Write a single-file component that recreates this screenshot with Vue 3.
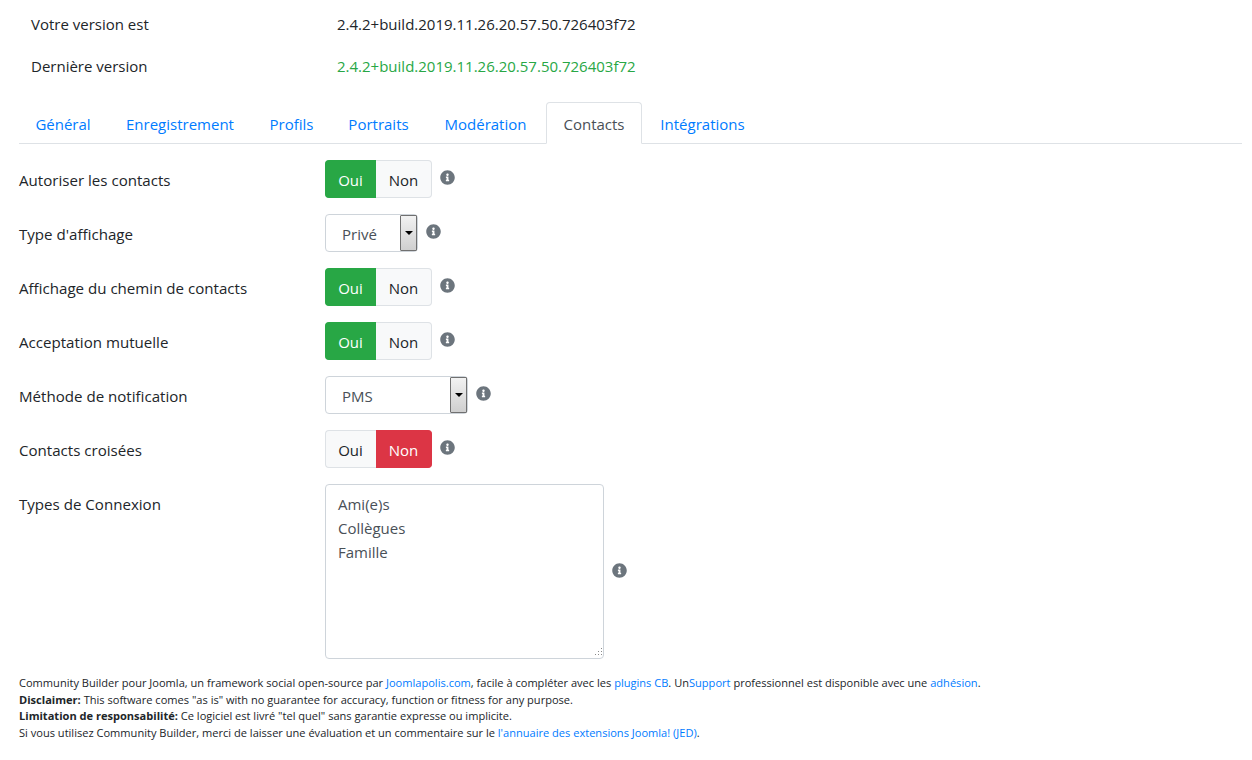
<template>
  <div class="page">
    <div class="version">
      <div class="version-row">
        <span class="version-label">Votre version est</span>
        <span>2.4.2+build.2019.11.26.20.57.50.726403f72</span>
      </div>
      <div class="version-row">
        <span class="version-label">Dernière version</span>
        <span class="latest">2.4.2+build.2019.11.26.20.57.50.726403f72</span>
      </div>
    </div>

    <ul class="tabs">
      <li
        v-for="tab in tabs"
        :key="tab.name"
        class="tab"
        :class="{ active: tab.name === 'Contacts' }"
        :style="{ width: tab.width + 'px' }"
      >{{ tab.name }}</li>
    </ul>

    <div class="form">
      <div class="row">
        <label>Autoriser les contacts</label>
        <div class="toggle"><span class="on">Oui</span><span>Non</span></div>
        <svg class="info" viewBox="0 0 512 512"><path :d="infoPath" /></svg>
      </div>
      <div class="row">
        <label>Type d'affichage</label>
        <div class="select short">
          <span>Privé</span>
          <span class="arrow"><i></i></span>
        </div>
        <svg class="info" viewBox="0 0 512 512"><path :d="infoPath" /></svg>
      </div>
      <div class="row">
        <label>Affichage du chemin de contacts</label>
        <div class="toggle"><span class="on">Oui</span><span>Non</span></div>
        <svg class="info" viewBox="0 0 512 512"><path :d="infoPath" /></svg>
      </div>
      <div class="row">
        <label>Acceptation mutuelle</label>
        <div class="toggle"><span class="on">Oui</span><span>Non</span></div>
        <svg class="info" viewBox="0 0 512 512"><path :d="infoPath" /></svg>
      </div>
      <div class="row">
        <label>Méthode de notification</label>
        <div class="select wide">
          <span>PMS</span>
          <span class="arrow"><i></i></span>
        </div>
        <svg class="info" viewBox="0 0 512 512"><path :d="infoPath" /></svg>
      </div>
      <div class="row">
        <label>Contacts croisées</label>
        <div class="toggle"><span>Oui</span><span class="off">Non</span></div>
        <svg class="info" viewBox="0 0 512 512"><path :d="infoPath" /></svg>
      </div>
      <div class="row last">
        <label>Types de Connexion</label>
        <div class="textarea">
          <div>Ami(e)s</div>
          <div>Collègues</div>
          <div>Famille</div>
          <svg class="grip" viewBox="0 0 11 11">
            <path d="M9 1h1v1H9zM6 4h1v1H6zM9 4h1v1H9zM3 7h1v1H3zM6 7h1v1H6zM9 7h1v1H9z" />
          </svg>
        </div>
        <svg class="info mid" viewBox="0 0 512 512"><path :d="infoPath" /></svg>
      </div>
    </div>

    <div class="footer">
      <div>Community Builder pour Joomla, un framework social open-source par <a>Joomlapolis.com</a>, facile à compléter avec les <a>plugins CB</a>. Un<a>Support</a> professionnel est disponible avec une <a>adhésion</a>.</div>
      <div><b>Disclaimer:</b> This software comes "as is" with no guarantee for accuracy, function or fitness for any purpose.</div>
      <div><b>Limitation de responsabilité:</b> Ce logiciel est livré "tel quel" sans garantie expresse ou implicite.</div>
      <div>Si vous utilisez Community Builder, merci de laisser une évaluation et un commentaire sur le <a>l'annuaire des extensions Joomla! (JED)</a>.</div>
    </div>
  </div>
</template>

<script setup>
const tabs = [
  { name: 'Général', width: 88 },
  { name: 'Enregistrement', width: 142 },
  { name: 'Profils', width: 77 },
  { name: 'Portraits', width: 93 },
  { name: 'Modération', width: 117 },
  { name: 'Contacts', width: 96 },
  { name: 'Intégrations', width: 117 }
]

// info-circle
const infoPath =
  'M256 8C119 8 8 119 8 256s111 248 248 248 248-111 248-248S393 8 256 8zm0 110c23 0 42 19 42 42s-19 42-42 42-42-19-42-42 19-42 42-42zm56 254c0 7-5 12-12 12h-88c-7 0-12-5-12-12v-24c0-7 5-12 12-12h12v-64h-12c-7 0-12-5-12-12v-24c0-7 5-12 12-12h64c7 0 12 5 12 12v100h12c7 0 12 5 12 12v24z'
</script>

<style>
body {
  margin: 0;
  background: #fff;
}
</style>

<style scoped>
.page {
  box-sizing: border-box;
  width: 1252px;
  height: 760px;
  padding: 3px 10px 0 19px;
  font-family: "Open Sans", "Noto Sans", sans-serif;
  font-size: 15px;
  line-height: 24px;
  color: #212529;
}

.version-row {
  display: flex;
  height: 42px;
  align-items: center;
  padding-left: 12px;
}

.version-label {
  width: 306px;
}

.latest {
  color: #28a745;
}

.tabs {
  display: flex;
  list-style: none;
  margin: 15px 0 0;
  padding: 0;
  border-bottom: 1px solid #dee2e6;
  height: 41px;
}

.tab {
  box-sizing: border-box;
  height: 42px;
  padding: 9px 0;
  margin-right: 2px;
  border: 1px solid transparent;
  border-radius: 4px 4px 0 0;
  color: #007bff;
  text-align: center;
}

.tab.active {
  color: #495057;
  background: #fff;
  border-color: #dee2e6 #dee2e6 #fff;
}

.form {
  padding-top: 16px;
}

.row {
  display: flex;
  align-items: flex-start;
  margin-bottom: 16px;
}

label {
  width: 306px;
  font-size: 15.1px;
  line-height: 40px;
  height: 38px;
}

.toggle {
  display: flex;
  height: 38px;
}

.toggle span {
  box-sizing: border-box;
  text-align: center;
  line-height: 38px;
  background: #f8f9fa;
  border: 1px solid #dee2e6;
}

.toggle span:first-child {
  width: 51px;
  padding-right: 1px;
  border-right: 0;
  border-radius: 4px 0 0 4px;
}

.toggle span:last-child {
  width: 56px;
  border-left: 0;
  border-radius: 0 4px 4px 0;
}

.toggle .on {
  background: #28a745;
  border-color: #28a745;
  color: #fff;
}

.toggle .off {
  background: #dc3545;
  border-color: #dc3545;
  color: #fff;
}

.info {
  width: 15px;
  height: 15px;
  margin: 10px 0 0 8px;
  fill: #6c757d;
}

.info.mid {
  margin-top: 79px;
}

.select {
  box-sizing: border-box;
  display: flex;
  justify-content: space-between;
  height: 38px;
  padding-left: 16px;
  line-height: 38px;
  border: 1px solid #ced4da;
  border-radius: 4px;
  color: #495057;
}

.select.short {
  width: 93px;
}

.select.wide {
  width: 143px;
}

.arrow {
  box-sizing: border-box;
  width: 17px;
  height: 36px;
  border: 1px solid #707070;
  border-radius: 1px;
  background: linear-gradient(#f2f2f2, #cfcfcf);
  display: flex;
  align-items: center;
  justify-content: center;
}

.arrow i {
  width: 0;
  height: 0;
  border-left: 4px solid transparent;
  border-right: 4px solid transparent;
  border-top: 4px solid #000;
}

.textarea {
  position: relative;
  box-sizing: border-box;
  width: 279px;
  height: 175px;
  padding: 7px 12px;
  border: 1px solid #ced4da;
  border-radius: 4px;
  color: #495057;
}

.grip {
  position: absolute;
  right: 0;
  bottom: 0;
  width: 11px;
  height: 11px;
  fill: #8a8a8a;
}

.footer {
  margin-top: 1.4px;
  font-size: 11.07px;
  line-height: 16.5px;
}

.footer a {
  color: #007bff;
}

.footer b {
  font-weight: 700;
}
</style>
